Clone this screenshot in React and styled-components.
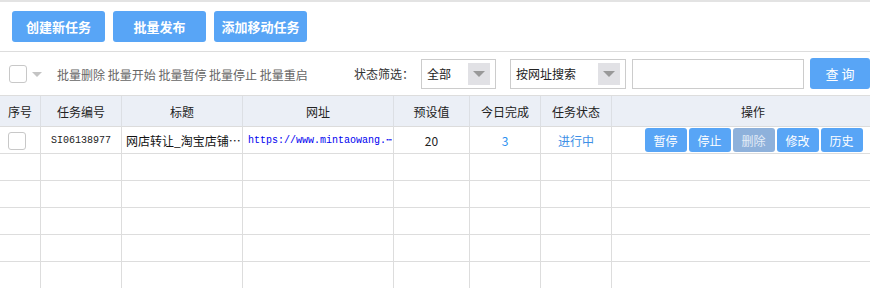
import styled, { createGlobalStyle } from 'styled-components';

const GlobalStyle = createGlobalStyle`
  body {
    margin: 0;
    background: #fff;
    overflow: hidden;
    font-family: "Noto Sans CJK SC", "Liberation Sans", sans-serif;
  }
`;

const COLS = '41px 81px 121px 151px 76px 71px 71px 283px';

const headers = ['序号', '任务编号', '标题', '网址', '预设值', '今日完成', '任务状态', '操作'];

const actions = [
  { label: '暂停' },
  { label: '停止' },
  { label: '删除', disabled: true },
  { label: '修改' },
  { label: '历史' },
];

function Caret({ color = '#999', w = 12, h = 6 }) {
  return (
    <svg width={w} height={h} viewBox="0 0 12 6">
      <path d="M0 0 L12 0 L6 6 Z" fill={color} />
    </svg>
  );
}

export default function App() {
  return (
    <Page>
      <GlobalStyle />
      <Toolbar>
        <MainButton>创建新任务</MainButton>
        <MainButton>批量发布</MainButton>
        <MainButton>添加移动任务</MainButton>
      </Toolbar>

      <FilterBar>
        <BatchGroup>
          <CheckBox />
          <CaretWrap>
            <Caret color="#c4c4c4" w={10} h={5} />
          </CaretWrap>
          <BatchText>批量删除 批量开始 批量暂停 批量停止 批量重启</BatchText>
        </BatchGroup>
        <SearchGroup>
          <Label>状态筛选：</Label>
          <Select $width={75}>
            <span>全部</span>
            <ArrowBox>
              <Caret />
            </ArrowBox>
          </Select>
          <Select $width={116} $gap={14}>
            <span>按网址搜索</span>
            <ArrowBox>
              <Caret />
            </ArrowBox>
          </Select>
          <SearchInput />
          <QueryButton>查 询</QueryButton>
        </SearchGroup>
      </FilterBar>

      <Table>
        <HeadRow>
          {headers.map((h) => (
            <HeadCell key={h}>{h}</HeadCell>
          ))}
        </HeadRow>
        <Row>
          <Cell $align="flex-start">
            <RowCheck />
          </Cell>
          <Cell>
            <Mono>SI06138977</Mono>
          </Cell>
          <Cell $align="flex-start">
            <Clip>网店转让_淘宝店铺⋯</Clip>
          </Cell>
          <Cell $align="flex-start">
            <Clip $mono $color="#0000f0">https://www.mintaowang.⋯</Clip>
          </Cell>
          <Cell>20</Cell>
          <Cell $color="#2b8ff0">3</Cell>
          <Cell $color="#3d8fe6">进行中</Cell>
          <Cell $last>
            <Actions>
              {actions.map((a) => (
                <ActionButton key={a.label} $disabled={a.disabled}>
                  {a.label}
                </ActionButton>
              ))}
            </Actions>
          </Cell>
        </Row>
        {[0, 1, 2, 3, 4].map((r) => (
          <Row key={r}>
            {headers.map((h, i) => (
              <Cell key={h} $last={i === headers.length - 1} />
            ))}
          </Row>
        ))}
      </Table>
    </Page>
  );
}

const Page = styled.div`
  width: 870px;
  overflow: hidden;
`;

const Toolbar = styled.div`
  display: flex;
  gap: 8px;
  padding: 9px 12px;
  border-top: 2px solid #e3e3e3;
  border-bottom: 1px solid #dddddd;
`;

const MainButton = styled.button`
  width: 93px;
  height: 31px;
  padding: 0;
  border: none;
  border-radius: 3px;
  background: #58a5f6;
  color: #fff;
  font-family: "Noto Sans CJK SC", sans-serif;
  font-size: 13px;
  font-weight: 700;
`;

const FilterBar = styled.div`
  height: 43px;
  display: flex;
  align-items: center;
  justify-content: space-between;
`;

const BatchGroup = styled.div`
  display: flex;
  align-items: center;
  padding-left: 9px;
  padding-top: 1px;
`;

const CheckBox = styled.span`
  width: 16px;
  height: 16px;
  border: 1px solid #c8c8c8;
  border-radius: 3px;
  background: #fff;
`;

const CaretWrap = styled.span`
  display: flex;
  margin: 0 15px 0 5px;
`;

const BatchText = styled.span`
  font-size: 12px;
  color: #666;
`;

const SearchGroup = styled.div`
  display: flex;
  align-items: center;
`;

const Label = styled.span`
  font-size: 12px;
  color: #333;
  margin-right: 7px;
`;

const Select = styled.div`
  box-sizing: border-box;
  width: ${(p) => p.$width}px;
  height: 30px;
  margin-left: ${(p) => p.$gap || 0}px;
  padding: 0 5px;
  display: flex;
  align-items: center;
  justify-content: space-between;
  border: 1px solid #cccccc;
  font-size: 12px;
  color: #222;
`;

const ArrowBox = styled.span`
  width: 22px;
  height: 22px;
  display: flex;
  align-items: center;
  justify-content: center;
  background: #e1e1e5;
`;

const SearchInput = styled.input`
  box-sizing: border-box;
  width: 172px;
  height: 30px;
  margin-left: 6px;
  border: 1px solid #cccccc;
  outline: none;
`;

const QueryButton = styled.button`
  width: 60px;
  height: 31px;
  margin-left: 6px;
  padding: 0;
  border: none;
  border-radius: 3px;
  background: #58a5f6;
  color: #fff;
  font-family: "Noto Sans CJK SC", sans-serif;
  font-size: 13px;
`;

const Table = styled.div`
  width: 895px;
  border-top: 1px solid #dddddd;
`;

const HeadRow = styled.div`
  display: grid;
  grid-template-columns: ${COLS};
  background: #ebeff6;
`;

const HeadCell = styled.div`
  box-sizing: border-box;
  height: 31px;
  display: flex;
  align-items: center;
  justify-content: center;
  border-right: 1px solid #dcdfe4;
  border-bottom: 1px solid #dcdcdc;
  font-size: 12px;
  color: #222;
`;

const Row = styled.div`
  display: grid;
  grid-template-columns: ${COLS};
`;

const Cell = styled.div`
  box-sizing: border-box;
  height: 27px;
  min-width: 0;
  display: flex;
  align-items: center;
  justify-content: ${(p) => p.$align || 'center'};
  border-right: ${(p) => (p.$last ? 'none' : '1px solid #dddddd')};
  border-bottom: 1px solid #dddddd;
  font-size: 12px;
  color: ${(p) => p.$color || '#222'};
`;

const RowCheck = styled.span`
  width: 16px;
  height: 16px;
  margin-left: 8px;
  margin-top: 2px;
  border: 1px solid #c8c8c8;
  border-radius: 3px;
`;

const Mono = styled.span`
  font-family: "Liberation Mono", monospace;
  font-size: 10px;
  color: #222;
`;

const Clip = styled.span`
  display: block;
  min-width: 0;
  flex: 1;
  padding-left: ${(p) => (p.$mono ? 5 : 4)}px;
  overflow: hidden;
  white-space: nowrap;
  font-family: ${(p) =>
    p.$mono ? '"Liberation Mono", "DejaVu Sans Mono", monospace' : '"Noto Sans CJK SC", sans-serif'};
  font-size: ${(p) => (p.$mono ? 10 : 12)}px;
  color: ${(p) => p.$color || '#111'};
`;

const Actions = styled.div`
  display: flex;
  gap: 2px;
`;

const ActionButton = styled.button`
  width: 42px;
  height: 24px;
  padding: 0;
  border: none;
  border-radius: 3px;
  background: ${(p) => (p.$disabled ? '#8eb1db' : '#58a5f6')};
  color: ${(p) => (p.$disabled ? '#e3ecf7' : '#fff')};
  font-family: "Noto Sans CJK SC", sans-serif;
  font-size: 12px;
`;
